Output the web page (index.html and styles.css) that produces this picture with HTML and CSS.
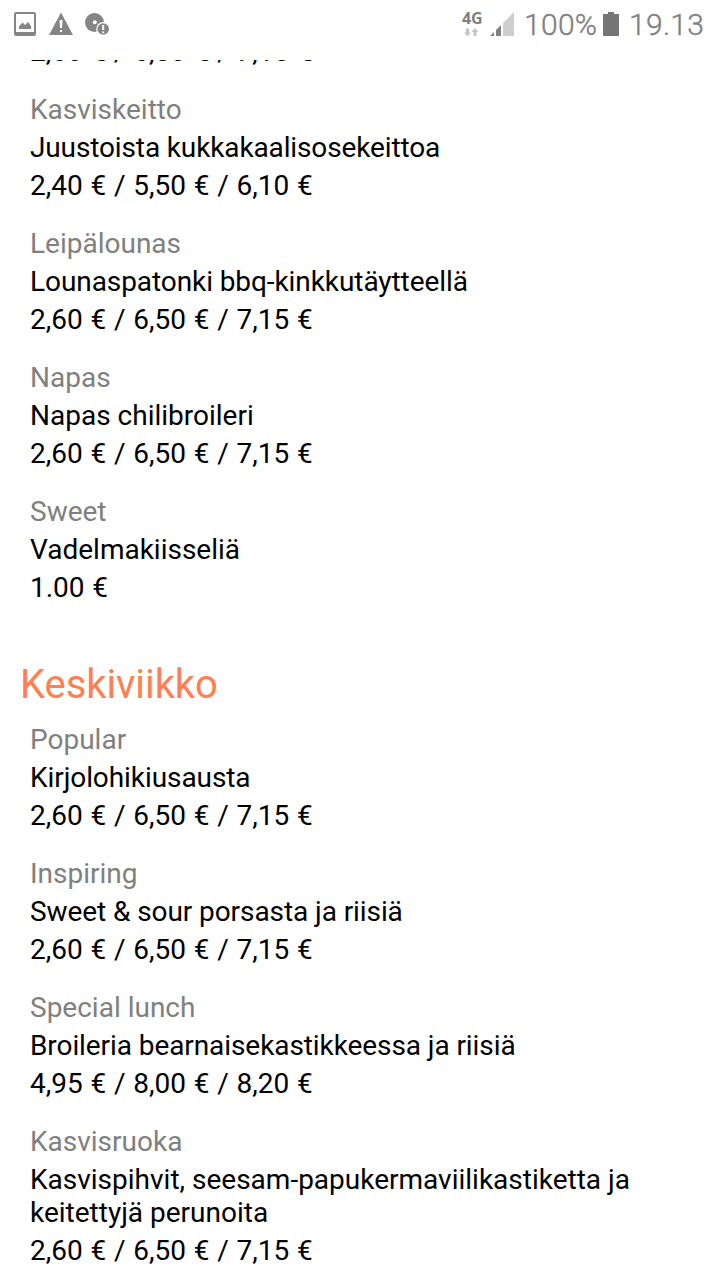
FILE: index.html
```html
<!DOCTYPE html>
<html lang="fi"><head><meta charset="utf-8"><title>Lounas</title><link rel="stylesheet" href="styles.css"></head>
<body>
<header class="status">
<svg class="notices" width="110" height="48" viewBox="0 0 110 48" fill="#858585">
<path fill-rule="evenodd" d="M16 12H34Q36 12 36 14V34Q36 36 34 36H16Q14 36 14 34V14Q14 12 16 12ZM16 14V32H34V14Z"/>
<path d="M19 29V26.500L22.500 22.500L25 25L28 22L31 26V29Z"/>
<path d="M61 12.500L73 35H49Z"/><path d="M59.500 20H62.500L62 28H60ZM60 30H62V32H60Z" fill="#fff"/>
<circle cx="94.500" cy="22.500" r="9.500"/><circle cx="94.800" cy="22.300" r="2" fill="#fff"/>
<circle cx="103.200" cy="29" r="7" fill="#fff"/><circle cx="103.200" cy="29" r="5.800"/><path d="M102.200 25H104.200V30H102.200ZM102.200 31.500H104.200V33.200H102.200Z" fill="#fff"/>
</svg>
<div class="system">
<div class="network"><span class="gen">4G</span>
<svg width="16" height="9" viewBox="0 0 16 9" fill="#c4c4c4"><path d="M2 0.500H5V4.500H7L3.500 8.500L0 4.500H2ZM9.500 8V4H7.500L11 0L14.500 4H12.500V8Z"/></svg></div>
<svg class="signal" width="24" height="24" viewBox="0 0 24 24"><path d="M0 24L4 20V24ZM6 24V18L11 13V24Z" fill="#808080"/><path d="M13 24V11L24 0V24Z" fill="#cecece"/></svg>
<span class="charge">100%</span>
<svg class="battery" width="16" height="24" viewBox="0 0 16 24"><path d="M0 2H5V0H11V2H16V24H0Z" fill="#757575"/></svg>
<span class="time">19.13</span>
</div>
</header>
<main class="menu">
<section class="day">
<article class="item"><p class="price">2,60 € / 6,50 € / 7,15 €</p></article>
<article class="item"><h3 class="kind">Kasviskeitto</h3><p class="dish tighter">Juustoista kukkakaalisosekeittoa</p><p class="price">2,40 € / 5,50 € / 6,10 €</p></article>
<article class="item"><h3 class="kind">Leipälounas</h3><p class="dish tight">Lounaspatonki bbq-kinkkutäytteellä</p><p class="price">2,60 € / 6,50 € / 7,15 €</p></article>
<article class="item"><h3 class="kind">Napas</h3><p class="dish">Napas chilibroileri</p><p class="price">2,60 € / 6,50 € / 7,15 €</p></article>
<article class="item"><h3 class="kind">Sweet</h3><p class="dish">Vadelmakiisseliä</p><p class="price">1.00 €</p></article>
</section>
<section class="day">
<h2 class="title">Keskiviikko</h2>
<article class="item"><h3 class="kind">Popular</h3><p class="dish tight">Kirjolohikiusausta</p><p class="price">2,60 € / 6,50 € / 7,15 €</p></article>
<article class="item"><h3 class="kind">Inspiring</h3><p class="dish tight">Sweet &amp; sour porsasta ja riisiä</p><p class="price">2,60 € / 6,50 € / 7,15 €</p></article>
<article class="item"><h3 class="kind">Special lunch</h3><p class="dish tight">Broileria bearnaisekastikkeessa ja riisiä</p><p class="price">4,95 € / 8,00 € / 8,20 €</p></article>
<article class="item"><h3 class="kind">Kasvisruoka</h3><p class="dish">Kasvispihvit, seesam-papukermaviilikastiketta ja keitettyjä perunoita</p><p class="price">2,60 € / 6,50 € / 7,15 €</p></article>
</section>
</main>
</body></html>
```

FILE: styles.css
```css
*{box-sizing:border-box;margin:0;padding:0}
body{width:720px;height:1280px;overflow:hidden;background:#fff;font-family:Roboto,sans-serif;color:#000;display:flex;flex-direction:column}
.status{height:60px;flex:none;display:flex;justify-content:space-between;color:#808080}
.system{display:flex;align-items:flex-start;font-size:30px;line-height:50px;font-weight:300;padding-right:15px}
.network{display:flex;flex-direction:column;padding-top:12px;gap:3px;width:28px}
.gen{font:700 16px/13px "Open Sans",sans-serif;height:13px;letter-spacing:-.2px}
.network svg{margin-left:2px}
.signal{margin-top:12px}
.charge,.time{-webkit-text-stroke:.4px currentColor;letter-spacing:.3px}
.charge{width:80px;padding-left:10px}
.battery{margin:12px 10px 0 9px}
.time{width:76px;white-space:nowrap}
.menu{flex:1;overflow:hidden;display:flex;flex-direction:column;justify-content:flex-end;min-height:0;padding-bottom:13px}
.day{display:flex;flex-direction:column;gap:25px;padding:0 30px}
.item{display:flex;flex-direction:column;gap:5px;font-size:28px;line-height:33px}
.kind{font-size:28px;font-weight:400;color:#808080}
.tight{letter-spacing:-.08px}
.tighter{letter-spacing:-.13px}
.price{font-kerning:none;word-spacing:.8px}
.title{font-size:40px;font-weight:400;color:#ff7f50;line-height:50px;margin:56px 0 -12px -10px;letter-spacing:-.08px}
```
